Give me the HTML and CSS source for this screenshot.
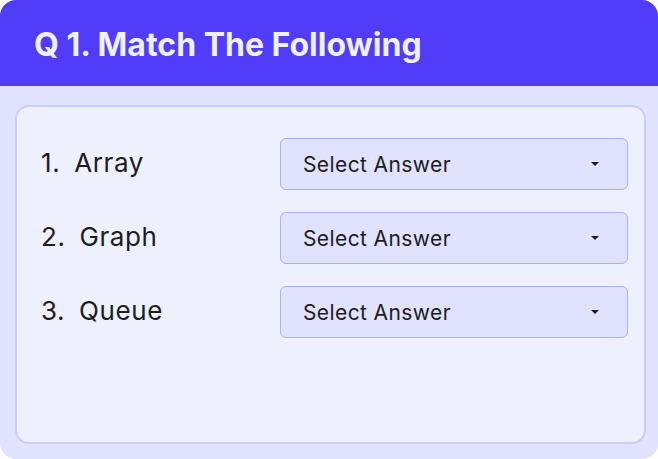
FILE: index.html
```html
<!DOCTYPE html>
<html>
<head>
<meta charset="utf-8">
<link rel="stylesheet" href="styles.css">
</head>
<body>
<div class="card">
  <div class="header"><h1 class="title">Q 1. Match The Following</h1></div>
  <div class="body">
    <div class="panel">
      <div class="row">
        <div class="label">1. Array</div>
        <div class="select"><span>Select Answer</span><span class="caret"></span></div>
      </div>
      <div class="row">
        <div class="label">2. Graph</div>
        <div class="select"><span>Select Answer</span><span class="caret"></span></div>
      </div>
      <div class="row">
        <div class="label">3. Queue</div>
        <div class="select"><span>Select Answer</span><span class="caret"></span></div>
      </div>
    </div>
  </div>
</div>
</body>
</html>
```
FILE: styles.css
```css
html, body {
  margin: 0;
  padding: 0;
  background: #ffffff;
}
body {
  font-family: Inter, "Noto Sans", sans-serif;
}
.card {
  width: 658px;
  height: 459px;
  border-radius: 16px;
  overflow: hidden;
  background: #e1e2fe;
  display: flex;
  flex-direction: column;
}
.header {
  height: 86px;
  background: #503cf9;
  display: flex;
  align-items: center;
  padding-left: 34px;
  flex-shrink: 0;
}
.title {
  margin: 0;
  color: #eef0fe;
  font-size: 32px;
  font-weight: 700;
  letter-spacing: 0;
  padding-top: 2px;
}
.body {
  flex: 1;
  padding: 19px 12px 15px 15px;
  display: flex;
}
.panel {
  flex: 1;
  background: #eef0fe;
  border: 2px solid #cacdfd;
  border-radius: 14px;
  padding: 31px 16px 0 24px;
  display: flex;
  flex-direction: column;
  gap: 22px;
}
.row {
  display: flex;
  align-items: center;
  justify-content: space-between;
  height: 52px;
}
.label {
  font-size: 26px;
  color: #1c1c22;
  letter-spacing: 0.6px;
  word-spacing: 6px;
  margin-top: -3px;
}
.select {
  width: 348px;
  height: 52px;
  box-sizing: border-box;
  background: #e1e2fe;
  border: 1px solid #aab0fb;
  border-radius: 6px;
  display: flex;
  align-items: center;
  justify-content: space-between;
  padding: 0 28px 0 22px;
  font-size: 21px;
  letter-spacing: 0.4px;
  color: #1c1c22;
}
.caret {
  width: 0;
  height: 0;
  border-left: 4px solid transparent;
  border-right: 4px solid transparent;
  border-top: 4px solid #1c1c22;
}
```
